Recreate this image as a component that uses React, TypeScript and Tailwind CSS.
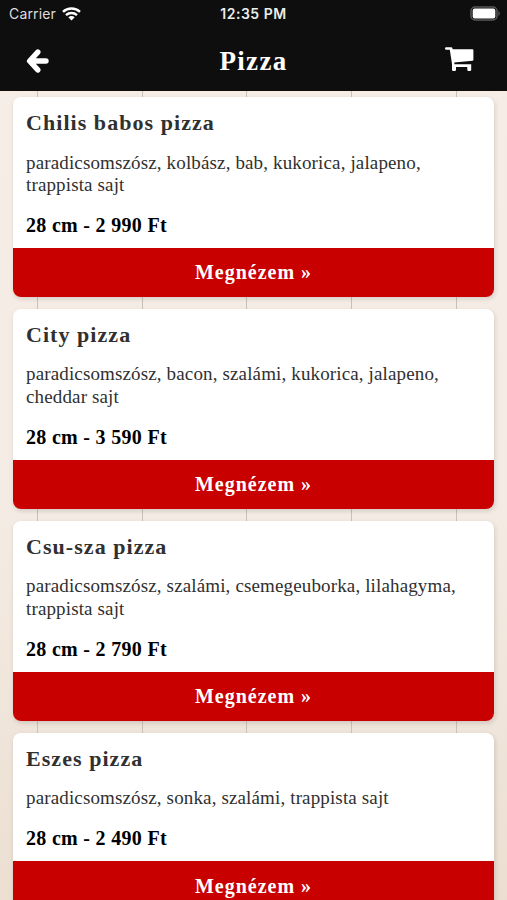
const STATUS_FONT = "font-['Inter','Liberation_Sans',sans-serif]";
const SERIF_FONT = "font-['Liberation_Serif',serif]";

const pizzas = [
  { name: "Chilis babos pizza", toppings: ["paradicsomszósz, kolbász, bab, kukorica, jalapeno,", "trappista sajt"], price: "2 990" },
  { name: "City pizza", toppings: ["paradicsomszósz, bacon, szalámi, kukorica, jalapeno,", "cheddar sajt"], price: "3 590" },
  { name: "Csu-sza pizza", toppings: ["paradicsomszósz, szalámi, csemegeuborka, lilahagyma,", "trappista sajt"], price: "2 790" },
  { name: "Eszes pizza", toppings: ["paradicsomszósz, sonka, szalámi, trappista sajt"], price: "2 490" },
];

function WifiIcon() {
  return (
    <svg width="19" height="14" viewBox="0 0 19 14" fill="none" stroke="white" strokeWidth="2.4" aria-hidden="true">
      <path d="M1 4.9C5.7.4 13.3.4 18 4.9" />
      <path d="M4 8.2c3.1-2.9 7.9-2.9 11 0" />
      <path d="M6.3 10.3c1.8-1.6 4.6-1.6 6.4 0L9.5 13.6Z" fill="white" stroke="none" />
    </svg>
  );
}

function BatteryIcon() {
  return (
    <svg width="31" height="15" viewBox="0 0 31 15" aria-hidden="true">
      <rect x="1" y="1" width="26" height="13" rx="4" fill="none" stroke="#58585a" strokeWidth="1.5" />
      <rect x="2.7" y="2.6" width="22.6" height="9.8" rx="2" fill="white" />
      <path d="M28.4 5c1.8.8 1.8 4.2 0 5Z" fill="#58585a" />
    </svg>
  );
}

function BackIcon() {
  return (
    <svg width="23" height="24" viewBox="0 0 23 24" fill="none" stroke="white" aria-hidden="true">
      <path d="M11.8 3.1 3.6 12l8.2 8.9" strokeWidth="5.4" strokeLinecap="round" strokeLinejoin="round" />
      <path d="M5 12h14.9" strokeWidth="5.6" strokeLinecap="round" />
      <path d="M4 12 10 5.5v13Z" fill="white" stroke="none" />
    </svg>
  );
}

function CartIcon() {
  return (
    <svg width="29" height="25" viewBox="0 0 29 25" fill="white" aria-hidden="true">
      <path d="M1.2.2h5.2q.7 0 .9.8l.4 1.2H27.4q1 0 1 1V12.7q0 .9-.9 1L9.2 15.6l.3 1.6H26.2v5.6q0 1.3-1.3 1.3h-1.4q-1.2 0-1.2-1.3V20H11v2.8q0 1.3-1.3 1.3H8.3Q7 24.1 7 22.8V17.1L4.8 2.7H1.2Q0 2.7 0 1.5T1.2.2Z" />
    </svg>
  );
}

export default function App() {
  return (
    <div className={`flex h-[900px] w-[507px] flex-col overflow-hidden bg-[#f4ebe3] text-[#303030] ${SERIF_FONT}`}>
      <header className="h-[91px] shrink-0 bg-[#0e0e0e] text-white">
        <div className={`grid h-[27px] grid-cols-3 items-center pr-[6px] pl-[9px] text-[14px] ${STATUS_FONT}`}>
          <div className="flex items-center gap-[6px] text-[#dedede]">
            <span className="tracking-[0.15px]">Carrier</span>
            <WifiIcon />
          </div>
          <span className="pr-[3px] text-center font-semibold tracking-[0.5px] whitespace-nowrap text-[#ececec]">12:35 PM</span>
          <div className="flex justify-end">
            <BatteryIcon />
          </div>
        </div>
        <div className="grid h-[68px] grid-cols-[1fr_auto_1fr] items-center pr-[33px] pl-[26px]">
          <BackIcon />
          <h1 className="pl-[7px] text-[27px] font-bold tracking-[1.3px]">Pizza</h1>
          <div className="flex -translate-y-[2px] justify-end">
            <CartIcon />
          </div>
        </div>
      </header>

      {/* Light wooden boards behind the cards */}
      <main className="flex-1 overflow-hidden bg-[repeating-linear-gradient(90deg,transparent_0_37px,#c9c2b9_37px_38px,transparent_38px_104.75px),linear-gradient(180deg,#f6eee6_0%,#f4ece4_50%,#ecdfd2_100%)] px-[13px] pt-[6px]">
        <div className="flex flex-col gap-[12px]">
          {pizzas.map((pizza) => (
            <article key={pizza.name} className="overflow-hidden rounded-[8px] bg-white shadow-[1px_2px_5px_rgba(0,0,0,0.14)]">
              <div className="px-[13px] pt-[13px] pb-[10px]">
                <h2 className="text-[22px] leading-[26px] font-bold tracking-[1.05px]">{pizza.name}</h2>
                <p className="mt-[15.5px] text-[19px] leading-[22.2px] tracking-[0.14px] whitespace-nowrap">
                  {pizza.toppings.map((line) => (
                    <span key={line} className="block">{line}</span>
                  ))}
                </p>
                <p className="mt-[17px] text-[20px] leading-[25px] font-bold tracking-[0.3px] text-black">28 cm - {pizza.price} Ft</p>
              </div>
              <button className="block h-[49px] w-full bg-[#c90000] text-[20px] font-bold tracking-[1px] text-white">
                Megnézem »
              </button>
            </article>
          ))}
        </div>
      </main>
    </div>
  );
}
